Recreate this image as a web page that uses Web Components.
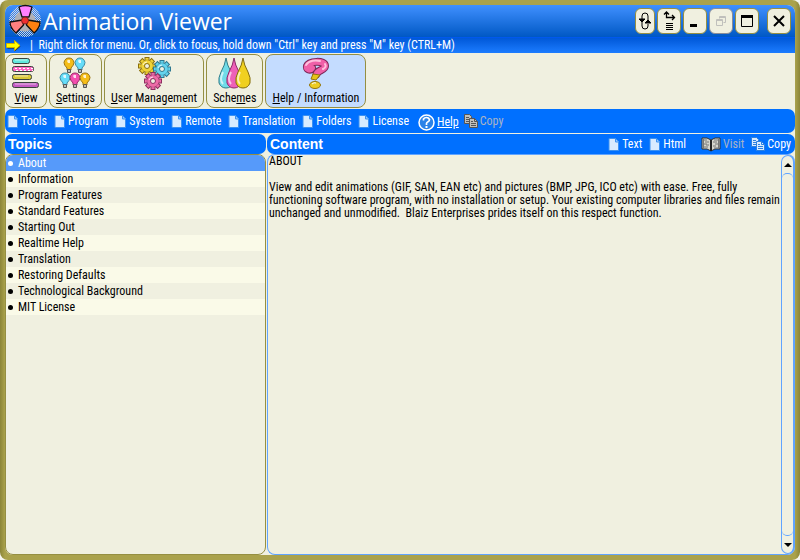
<!DOCTYPE html>
<html lang="en">
<head>
<meta charset="utf-8">
<title>Animation Viewer</title>
<style>
html, body { margin: 0; height: 100%; background: #f4f4ee; }
body { font: 12px/13px "Roboto Condensed", Roboto, sans-serif; color: #000; --olive: #958f42; --paper: #f0f0e0; --blue: #0070ff; --sky: #60a4ff; }
</style>
</head>
<body>
<app-window></app-window>
<script>
const G = {
  page: ['0 0 12 13', 12, 13, '<path d="M1 .5h6.500l3 3V12.500H1z" fill="#d8ebff" stroke="#3b91f2"/><path d="M7.500 1v3h3" fill="#8fc2ff" stroke="#3b91f2"/>'],
  copy: ['0 0 14 14', 14, 14, '<path d="M.5 .5h5l2 2v7h-7z" fill="var(--sheet)" stroke="var(--edge)"/><path d="M2 3.500h3M2 5.500h4M2 7.500h4" stroke="var(--edge)"/><path d="M5.500 4.500h5l3 3v6h-8z" fill="var(--sheet)" stroke="var(--edge)"/><path d="M10.500 4.500v3h3M7 7.500h2M7 9.500h5M7 11.500h5" fill="none" stroke="var(--edge)"/>'],
  help: ['0 0 17 17', 17, 17, '<circle cx="8.500" cy="8.500" r="7.500" fill="#2b83e8" stroke="#fff" stroke-width="1.500"/><path d="M5.500 6.500V5q1-1.500 3-1.500t3 2q0 1.500-1.500 2.300T8.500 9.500V11" fill="none" stroke="#fff" stroke-width="1.700"/><path d="M7.500 12h2v2h-2z" fill="#fff"/>'],
  book: ['0 0 20 15', 20, 15, '<path d="M1 1h5l4 2 4-2h5v11h-5l-4 2-4-2H1z" fill="#d5d5cd" stroke="#333"/><path d="M10 3v11" stroke="#222" stroke-width="2"/><path d="M3 3h3M4 5h4M3 7h3M5 8h3M3 10h4M13 3h4M12 5h4M14 7h3M12 9h3M13 11h4" stroke="#777"/><path d="M2.500 2v10M17.500 2v10" stroke="#777"/>'],
  arrow: ['0 0 16 12', 16, 12, '<path d="M1.500 4.500h7v-3l6 5-6 5v-3h-7z" fill="#222"/><path d="M.5 3.500h8v-3l5.500 5-5.500 5v-3h-8z" fill="#ff0" stroke="#d0b000"/>'],
  fan: ['0 0 34 34', 34, 34, '<defs><pattern id="d" width="2" height="2" patternUnits="userSpaceOnUse"><path d="M0 0h1v1H0zM1 1h1v1H1z" fill="#d5d5dd"/></pattern></defs><circle cx="17" cy="17" r="16" fill="url(#d)"/><circle cx="17" cy="17" r="10.500" fill="#b0b0b4"/><g stroke="#111" stroke-width="1.300" stroke-linejoin="round"><path d="M11 3q6-3 13 0l-3 10h-7z" fill="#ff80ff"/><path d="M14.500 16L2 18q0 6 6 11l7.500-8z" fill="#ff8080"/><path d="M19.500 16L32 18q0 6-6 11l-7.500-8z" fill="#ff8010"/></g><circle cx="17" cy="16.500" r="3.500" fill="#f03030" stroke="#802020"/>'],
  swap: ['0 0 14 18', 14, 18, '<path d="M4 7V4q0-3 3-3t3 3v6M4 8v6q0 3 3 3t3-3v-2" fill="none" stroke="#000"/><path d="M1 7h6l-3 3zM7 11h6l-3-3z" stroke="#000"/>'],
  tree: ['0 0 14 20', 14, 20, '<path d="M4.500 2v4.500h8M2 3.500L4.500 1 7 3.500M10 4L12.500 6.500 10 9" fill="none" stroke="#000" stroke-width="1.300"/><path d="M4 12.500h7M4 14.500h7M4 16.500h7M4 18.500h7" stroke="#000"/>'],
  min: ['0 0 14 14', 14, 14, '<path d="M2 10h7v3H2z"/>'],
  restore: ['0 0 12 12', 12, 12, '<path d="M1.500 4.500h6v6h-6zM1.500 5.500h6M4.500 3.500v-2h6v6h-2M4.500 2.500h6" fill="none" stroke="#c0c0bc"/>'],
  max: ['0 0 12 12', 12, 12, '<path d="M.5 1h11v10.500H.5z" fill="none" stroke="#000"/><path d="M0 0h12v3H0z"/>'],
  close: ['0 0 12 12', 12, 12, '<path d="M1 1l10 10M11 1L1 11" stroke="#000" stroke-width="2"/>'],
  up: ['0 0 8 4', 8, 4, '<path d="M0 4h8L4 0z"/>'],
  down: ['0 0 8 4', 8, 4, '<path d="M0 0h8L4 4z"/>'],
  view: ['0 0 28 32', 28, 32, '<g stroke="#39423e"><rect x=".5" y="1.500" width="17" height="5" rx="2" fill="#60e8dc"/><rect x=".5" y="9.500" width="21" height="5" rx="2" fill="#ff68c4"/><rect x=".5" y="17.500" width="19" height="5" rx="2" fill="#d8c838"/><rect x=".5" y="25.500" width="26" height="5" rx="2" fill="#c45ac4"/></g><path d="M3 3h12M3 19h13M3 27h21" stroke="#fff" opacity=".6"/><path d="M3 11.500h18M4 13.500h17" stroke="#fff" stroke-dasharray="2 2"/>'],
  bulbs: ['0 0 32 33', 32, 33, ''],
  gears: ['0 0 34 33', 34, 33, ''],
  drops: ['0 0 34 33', 34, 33, ''],
  question: ['0 0 30 33', 30, 33, '<g fill="none" stroke-linecap="round" stroke-linejoin="round"><path d="M11 11C9 14 5 12 6 9C8 4 24 3 24 9C24 13 17 13 15.500 17" stroke="#7c2858" stroke-width="8"/><path d="M11 11C9 14 5 12 6 9C8 4 24 3 24 9C24 13 17 13 15.500 17" stroke="#f060a8" stroke-width="6"/><path d="M5 8C8 3 15 3 19 4M24 7q2 3-2 5" stroke="#ffc0de" stroke-width="2"/></g><path d="M12 17l7 1-4 5-5-1z" fill="#e6c418" stroke="#93750c"/><ellipse cx="14" cy="28" rx="5.500" ry="3.500" fill="#edcc20" stroke="#93750c"/><path d="M11 27q2-2 4-1" stroke="#fff" fill="none"/>']
};
const bulb = (x, y, c, d) => `<g transform="translate(${x} ${y})"><path d="M3 10Q0 7 0 4.500Q1 0 5 0t5 4.500Q10 7 7 10v2H3z" fill="${c}" stroke="${d}"/><path d="M3 3q1-2 3-1v3H4z" fill="#fff" opacity=".8"/><path d="M3.500 11.500h3v3h-3z" fill="#bbb" stroke="#555"/></g>`;
G.bulbs[3] = bulb(5, 1, '#f5bd18', '#9c7410') + bulb(16, 1, '#66dcf8', '#3b8ba5') + bulb(1, 16, '#66dcf8', '#3b8ba5') + bulb(11, 16, '#f34fae', '#9c2868') + bulb(21, 16, '#f5bd18', '#9c7410');
const gear = (x, y, c, d) => { let t = ''; for (let a = 0; a < 360; a += 45) t += `<rect x="-2" y="-8.500" width="4" height="5" transform="rotate(${a})" fill="${c}" stroke="${d}"/>`; return `<g transform="translate(${x} ${y})">${t}<circle r="6" fill="${c}" stroke="${d}" stroke-width=".5"/><circle r="5.500" fill="${c}"/><path d="M-4-1Q-3-4 0-4" stroke="#fff" fill="none" opacity=".8"/><circle r="2.500" fill="#f0f0e0" stroke="${d}"/></g>`; };
G.gears[3] = gear(10, 9, '#f0d438', '#8a7010') + gear(25, 12, '#64d4ee', '#2e7890') + gear(16, 24, '#ee6ca8', '#8c3060');
const drop = (x, c, d) => `<g transform="translate(${x} 1)"><path d="M7 0Q8 7 12 14Q15 20 14 25Q12 30 7 30T0 25Q-1 20 2 14Q6 7 7 0z" fill="${c}" stroke="${d}"/><path d="M4 14Q0 22 4 26" stroke="#fff" stroke-width="2" fill="none" opacity=".65"/></g>`;
G.drops[3] = drop(1, '#70dce8', '#327c88') + drop(9, '#ee60b8', '#8c2868') + drop(18, '#f0d020', '#826c10');

function element(name, render) {
  customElements.define(name, class extends HTMLElement {
    connectedCallback() {
      if (!this.shadowRoot) this.attachShadow({ mode: 'open' }).innerHTML = '<style>*{box-sizing:border-box}[hidden]{display:none}button{font:inherit;color:inherit;background:none;border:0;padding:0;margin:0}</style>' + render(this);
    }
  });
}

element('app-icon', e => {
  const [box, w, h, body] = G[e.getAttribute('name')];
  return `<style>:host{display:block;flex:none}svg{display:block}</style><svg aria-hidden="true" viewBox="${box}" width="${w}" height="${h}">${body}</svg>`;
});

element('caption-button', e => `<style>
:host{display:block}
button{width:var(--w,24px);height:26px;display:grid;place-items:center;background:var(--paper);border:1px solid var(--olive);border-radius:6px}
button:disabled{border-color:#888c98}
</style><button aria-label="${e.getAttribute('label')}" ${e.hasAttribute('off') ? 'disabled' : ''}><app-icon name="${e.getAttribute('icon')}"></app-icon></button>`);

element('title-bar', () => `<style>
:host{display:flex;align-items:center;height:33px;padding:0 4px 0 3px;gap:1px;background:linear-gradient(#4090ff,#0058c4);border-bottom:1px solid #0058ee;border-radius:8px 8px 0 0;color:#fff;box-sizing:border-box}
h1{flex:1;margin:0;font:23px/32px "Open Sans","Noto Sans",sans-serif}
.narrow{--w:20px}.last{margin-left:6px}
nav{display:flex;gap:2px}
</style><app-icon name="fan"></app-icon><h1>Animation Viewer</h1><nav aria-label="Window">
<caption-button class="narrow" icon="swap" label="Swap"></caption-button>
<caption-button icon="tree" label="Options"></caption-button>
<caption-button icon="min" label="Minimize"></caption-button>
<caption-button icon="restore" label="Restore" off></caption-button>
<caption-button icon="max" label="Maximize"></caption-button>
<caption-button class="last" icon="close" label="Close"></caption-button></nav>`);

element('hint-bar', () => `<style>
:host{display:flex;align-items:center;gap:8px;height:15px;padding-left:1px;background:linear-gradient(#0058d8,#1c7cff);color:#fff;white-space:nowrap}
</style><app-icon name="arrow"></app-icon><span>|&nbsp; <slot></slot></span>`);

element('tool-button', e => `<style>
:host{display:block}
button{display:flex;flex-direction:column;align-items:center;justify-content:space-between;height:54px;padding:2px 6px;border:1px solid var(--olive);border-radius:8px;background:var(--paper);white-space:nowrap}
button[aria-pressed=true]{background:#c4dcff}
</style><button aria-pressed="${e.hasAttribute('on')}"><app-icon name="${e.getAttribute('icon')}"></app-icon><span><slot></slot></span></button>`);

element('menu-item', e => `<style>
:host{display:block;color:#fff;--edge:#2c80e0;--sheet:#d8ebff}
:host([off]){color:#a9b3c4;--edge:#555;--sheet:#c0c0bc}
:host([link]) span{text-decoration:underline}
button{display:flex;align-items:center;gap:2px;height:18px;white-space:nowrap}
</style><button ${e.hasAttribute('off') ? 'disabled' : ''}><app-icon name="${e.getAttribute('icon') || 'page'}"></app-icon><span><slot></slot></span></button>`);

element('panel-header', e => `<style>
:host{display:flex;align-items:center;height:20px;padding:0 4px 0 3px;background:var(--blue);border-radius:7px;color:#fff;box-sizing:border-box}
h2{flex:1;margin:0;font:bold 14px/18px "Liberation Sans",sans-serif}
div{display:flex;gap:7px}
</style><h2>${e.getAttribute('label')}</h2><div><slot></slot></div>`);

element('topic-list', e => {
  const t = ['About', 'Information', 'Program Features', 'Standard Features', 'Starting Out', 'Realtime Help', 'Translation', 'Restoring Defaults', 'Technological Background', 'MIT License'];
  return `<style>
:host{display:block;flex:1;border:1px solid var(--olive);border-radius:8px;overflow:hidden}
ul{list-style:none;margin:0;padding:0}
button{display:flex;align-items:center;gap:5px;width:100%;height:16px;padding-left:2px;text-align:left}
button::before{content:"";width:5px;height:5px;border-radius:50%;background:currentColor}
li:nth-child(even){background:#fafae8}
button[aria-current]{background:#569afa;color:#fff}
</style><ul>${t.map((s, i) => `<li><button${i ? '' : ' aria-current="true"'}>${s}</button></li>`).join('')}</ul>`;
});

element('scroll-bar', () => `<style>
:host{display:flex;flex-direction:column;width:14px;flex:none;border:1px solid var(--sky);border-right-width:2px;border-radius:8px;box-sizing:border-box}
button{display:grid;place-items:center;height:17px}
.thumb{flex:1;border:solid var(--sky);border-width:1px 0;border-radius:5px}
</style><button aria-label="Scroll up"><app-icon name="up"></app-icon></button><div class="thumb"></div><button aria-label="Scroll down"><app-icon name="down"></app-icon></button>`);

element('content-view', () => `<style>
:host{display:flex;flex:1;border:1px solid var(--sky);border-right:0;border-radius:8px;min-height:0}
article{flex:1;padding-left:1px}
</style><article><slot></slot></article><scroll-bar></scroll-bar>`);

element('app-window', () => `<style>
:host{display:flex;flex-direction:column;height:100vh;padding:5px;box-sizing:border-box;background:linear-gradient(90deg,#8b8538,#aaa24c 5px,#aaa24c calc(100% - 5px),#8b8538);border-radius:8px}
.body{flex:1;display:flex;flex-direction:column;min-height:0;background:var(--paper);border-radius:8px}
.tools{display:flex;gap:2px;padding:1px 0}
.menu{display:flex;align-items:center;gap:7px;height:24px;padding-left:2px;margin-bottom:1px;background:var(--blue);border-radius:7px}
.help{margin-left:2px;padding-top:3px}.last{margin-left:-2px}
.panes{flex:1;display:grid;grid-template-columns:minmax(0,261fr) minmax(0,528fr);gap:1px;min-height:0}
section{display:flex;flex-direction:column;min-height:0}
p{margin:0 0 13px;white-space:pre-wrap}
.visit{margin-left:8px}
u{text-underline-offset:1px}
</style>
<div class="body">
<title-bar></title-bar>
<hint-bar>Right click for menu. Or, click to focus, hold down "Ctrl" key and press "M" key (CTRL+M)</hint-bar>
<div class="tools">
<tool-button icon="view"><u>V</u>iew</tool-button>
<tool-button icon="bulbs"><u>S</u>ettings</tool-button>
<tool-button icon="gears"><u>U</u>ser Management</tool-button>
<tool-button icon="drops">Sche<u>m</u>es</tool-button>
<tool-button icon="question" on><u>H</u>elp / Information</tool-button>
</div>
<nav class="menu" aria-label="Topics menu">
<menu-item>Tools</menu-item><menu-item>Program</menu-item><menu-item>System</menu-item><menu-item>Remote</menu-item><menu-item>Translation</menu-item><menu-item>Folders</menu-item><menu-item>License</menu-item>
<menu-item class="help" icon="help" link>Help</menu-item><menu-item class="last" icon="copy" off>Copy</menu-item>
</nav>
<div class="panes">
<section><panel-header label="Topics"></panel-header><topic-list></topic-list></section>
<section><panel-header label="Content"><menu-item>Text</menu-item><menu-item>Html</menu-item><menu-item class="visit" icon="book" off>Visit</menu-item><menu-item icon="copy">Copy</menu-item></panel-header>
<content-view><p>ABOUT</p><p>View and edit animations (GIF, SAN, EAN etc) and pictures (BMP, JPG, ICO etc) with ease. Free, fully functioning software program, with no installation or setup. Your existing computer libraries and files remain unchanged and unmodified.  Blaiz Enterprises prides itself on this respect function.</p></content-view></section>
</div>
</div>`);
</script>
</body>
</html>
